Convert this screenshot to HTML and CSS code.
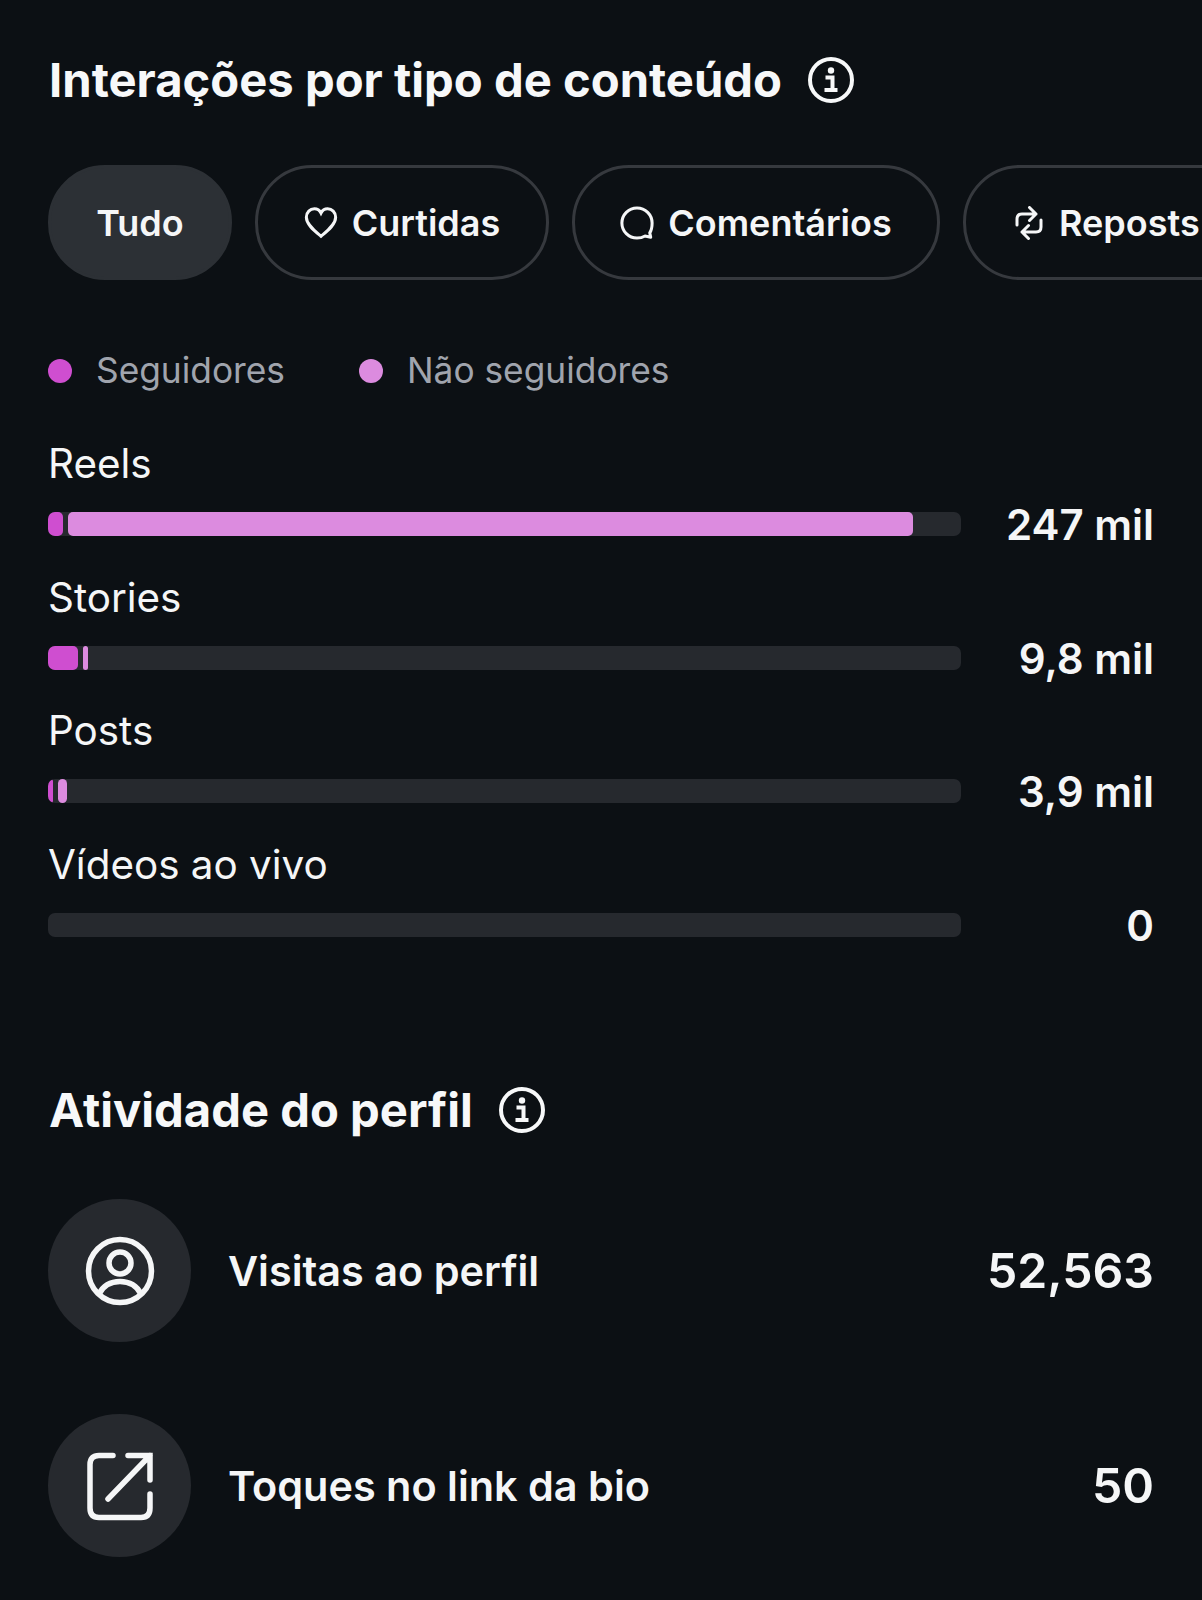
FILE: index.html
```html
<!DOCTYPE html>
<html lang="pt">
<head>
<meta charset="utf-8">
<title>Interações</title>
<link rel="stylesheet" href="styles.css">
</head>
<body>
<main class="page">
  <section class="interactions">
    <h2 class="title">Interações por tipo de conteúdo
      <svg class="info" viewBox="0 0 46 46" aria-hidden="true"><circle cx="23" cy="23" r="21" fill="none" stroke="currentColor" stroke-width="4"/><circle cx="23" cy="13.5" r="3.200" fill="currentColor"/><path d="M17.5 20.5h7v11.5M16.5 33h13" fill="none" stroke="currentColor" stroke-width="4"/></svg>
    </h2>
    <div class="pills">
      <div class="pill pill-active tudo">Tudo</div>
      <div class="pill curtidas">
        <svg class="pill-icon" viewBox="0 0 36 36" aria-hidden="true"><path d="M18 32C12 27 2.500 20 2.500 12C2.500 6.500 6.500 3 11 3C14 3 16.500 4.500 18 7.500C19.500 4.500 22 3 25 3C29.500 3 33.500 6.500 33.500 12C33.500 20 24 27 18 32Z" fill="none" stroke="currentColor" stroke-width="3.200"/></svg>
        Curtidas</div>
      <div class="pill comentarios">
        <svg class="pill-icon" viewBox="0 0 36 36" aria-hidden="true"><path d="M31.500 28.500C33.500 25.500 34 22 34 18A16 16 0 1 0 18 34C21 34 24 33.300 26.500 31.800L32.500 33Z" fill="none" stroke="currentColor" stroke-width="3.200" stroke-linejoin="round"/></svg>
        Comentários</div>
      <div class="pill reposts">
        <svg class="pill-icon repost-icon" viewBox="0 0 28 34" aria-hidden="true"><path d="M2 19V13Q2 8 7 8H21M14.500 1.500L21 8L14.500 14.500M26 14V21Q26 26 21 26H7M13.500 19.500L7 26L13.500 32.500" fill="none" stroke="currentColor" stroke-width="3" stroke-linecap="round" stroke-linejoin="round"/></svg>
        Reposts</div>
    </div>
    <div class="legend">
      <span class="legend-item"><i class="dot dot-a"></i>Seguidores</span>
      <span class="legend-item"><i class="dot dot-b"></i>Não seguidores</span>
    </div>
    <div class="rows">
      <div class="row">
        <div class="label">Reels</div>
        <div class="track"><span class="seg seg-a" style="width:15px"></span><span class="seg seg-b" style="width:845px"></span></div>
        <div class="value">247 mil</div>
      </div>
      <div class="row">
        <div class="label">Stories</div>
        <div class="track"><span class="seg seg-a" style="width:30px"></span><span class="seg seg-b" style="width:5px"></span></div>
        <div class="value">9,8 mil</div>
      </div>
      <div class="row">
        <div class="label">Posts</div>
        <div class="track"><span class="seg seg-a" style="width:5px"></span><span class="seg seg-b" style="width:9px"></span></div>
        <div class="value">3,9 mil</div>
      </div>
      <div class="row">
        <div class="label">Vídeos ao vivo</div>
        <div class="track"></div>
        <div class="value">0</div>
      </div>
    </div>
  </section>
  <section class="activity">
    <h2 class="title">Atividade do perfil
      <svg class="info" viewBox="0 0 46 46" aria-hidden="true"><circle cx="23" cy="23" r="21" fill="none" stroke="currentColor" stroke-width="4"/><circle cx="23" cy="13.5" r="3.200" fill="currentColor"/><path d="M17.5 20.5h7v11.5M16.5 33h13" fill="none" stroke="currentColor" stroke-width="4"/></svg>
    </h2>
    <div class="stat">
      <div class="avatar"><svg class="avatar-icon" viewBox="0 0 70 70" aria-hidden="true"><circle cx="35" cy="35" r="31.500" fill="none" stroke="currentColor" stroke-width="5.500"/><circle cx="35" cy="27" r="11" fill="none" stroke="currentColor" stroke-width="5.500"/><path d="M14 58C18 50 25 45.500 35 45.500C45 45.500 52 50 56 58" fill="none" stroke="currentColor" stroke-width="5.500"/></svg></div>
      <div class="stat-label">Visitas ao perfil</div>
      <div class="stat-value">52,563</div>
    </div>
    <div class="stat">
      <div class="avatar"><svg class="avatar-icon" viewBox="0 0 70 70" aria-hidden="true"><path d="M28 4.500H14Q5 4.500 5 13.500V57Q5 66.500 14 66.500H56Q65 66.500 65 57V43" fill="none" stroke="currentColor" stroke-width="5.500" stroke-linecap="round"/><path d="M43 4.500H65V29M65 4.500L23 48" fill="none" stroke="currentColor" stroke-width="5.500" stroke-linecap="round"/></svg></div>
      <div class="stat-label">Toques no link da bio</div>
      <div class="stat-value">50</div>
    </div>
  </section>
</main>
</body>
</html>
```
FILE: styles.css
```css
html, body {
  margin: 0;
  padding: 0;
  background: #0c1014;
}
.page {
  width: 1202px;
  height: 1600px;
  overflow: hidden;
  box-sizing: border-box;
  padding-top: 52px;
  font-family: Inter, "Liberation Sans", sans-serif;
  color: #f5f6f7;
}
.title {
  display: flex;
  align-items: center;
  gap: 26px;
  margin: 0;
  padding-left: 49px;
  font-size: 47.2px;
  line-height: 56px;
  font-weight: 700;
  color: #f7f8f9;
}
.info {
  width: 46px;
  height: 46px;
  flex: none;
}
.pills {
  display: flex;
  gap: 23px;
  margin-top: 57px;
  padding-left: 48px;
  width: 1400px;
}
.pill {
  display: flex;
  align-items: center;
  justify-content: center;
  gap: 14px;
  box-sizing: border-box;
  height: 115px;
  padding-top: 1px;
  border: 3px solid #36393e;
  border-radius: 57px;
  font-size: 36px;
  font-weight: 600;
  flex: none;
}
.pill-active {
  background: #2c3035;
  border-color: #2c3035;
}
.tudo { width: 184px; }
.curtidas { width: 294px; }
.comentarios { width: 368px; }
.reposts { width: 320px; justify-content: flex-start; padding-left: 49px; gap: 16px; }
.pill-icon {
  width: 34px;
  height: 34px;
  flex: none;
}
.repost-icon {
  width: 28px;
}
.legend {
  display: flex;
  gap: 74px;
  margin-top: 68px;
  padding-left: 48px;
  font-size: 35.3px;
  line-height: 46px;
  color: #a0a4ad;
}
.legend-item {
  display: flex;
  align-items: center;
  gap: 24px;
}
.dot {
  width: 24px;
  height: 24px;
  border-radius: 50%;
}
.dot-a { background: #cf4ed0; }
.dot-b { background: #dc8bdf; }
.rows {
  margin-top: 46px;
  padding: 0 48px;
  display: flex;
  flex-direction: column;
  gap: 25.7px;
}
.row {
  display: grid;
  grid-template-columns: 913px 1fr;
  align-items: center;
}
.label {
  grid-column: 1 / -1;
  font-size: 40.4px;
  line-height: 48px;
  font-weight: 400;
  margin-bottom: 12px;
}
.track {
  display: flex;
  gap: 5px;
  height: 24px;
  border-radius: 7px;
  background: #26292e;
  overflow: hidden;
}
.seg { display: block; height: 100%; border-radius: 5px; }
.seg-a { background: #cf4ed0; }
.seg-b { background: #dc8bdf; }
.value {
  text-align: right;
  padding-top: 2px;
  font-size: 42px;
  line-height: 46px;
  font-weight: 600;
}
.activity { margin-top: 133px; }
.activity .title { margin-bottom: 61px; }
.stat {
  display: flex;
  align-items: center;
  padding: 0 48px;
  margin-bottom: 72px;
}
.avatar {
  display: flex;
  align-items: center;
  justify-content: center;
  width: 143px;
  height: 143px;
  border-radius: 50%;
  background: #26292e;
  flex: none;
}
.avatar-icon { width: 70px; height: 70px; }
.stat-label {
  margin-left: 37px;
  flex: 1;
  font-size: 41.4px;
  font-weight: 600;
}
.stat-value {
  font-size: 48.2px;
  font-weight: 600;
}
```
